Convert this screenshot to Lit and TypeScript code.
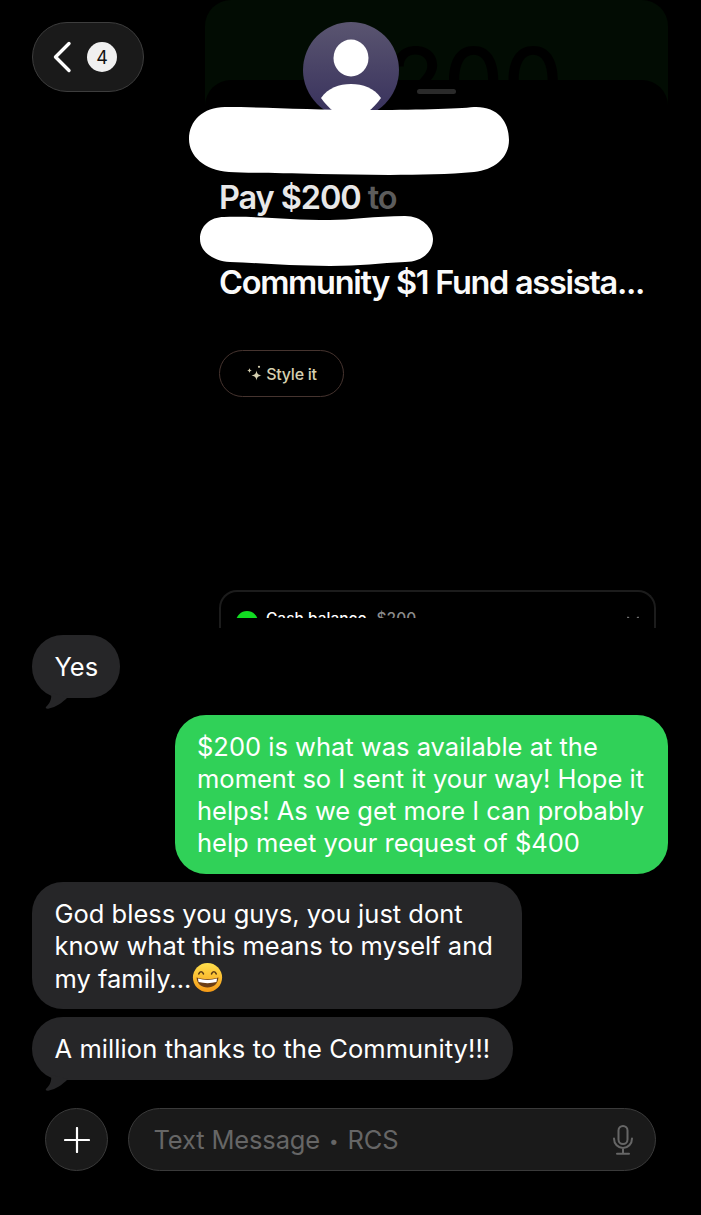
import { LitElement, html, css } from "lit";
import { customElement } from "lit/decorators.js";

@customElement("app-root")
export class AppRoot extends LitElement {
    static styles = css`
    :host {
      display: block;
      width: 701px;
      height: 1215px;
      background: #000;
      overflow: hidden;
      font-family: Inter, "Liberation Sans", sans-serif;
      color: #fff;
    }

    /* attachment preview at the top of the thread */
    .preview {
      position: relative;
      height: 630px;
      box-sizing: border-box;
      padding: 22px 46px 0 32px;
      overflow: hidden;
    }

    .green-card {
      position: absolute;
      left: 205px;
      top: 0;
      width: 463px;
      height: 105px;
      border-radius: 26px 26px 0 0;
      background: #020c03;
      overflow: hidden;
    }

    .amount {
      position: absolute;
      left: 123px;
      top: 31px;
      font-size: 92px;
      font-weight: 500;
      line-height: 100px;
      color: #000;
    }

    .sheet {
      position: absolute;
      left: 205px;
      top: 80px;
      width: 463px;
      height: 300px;
      border-radius: 26px 26px 0 0;
      background: #000;
    }

    .grabber {
      position: absolute;
      left: 212px;
      top: 9px;
      width: 39px;
      height: 5px;
      border-radius: 3px;
      background: #2a2a2a;
    }

    .top-row {
      position: relative;
      display: flex;
      align-items: flex-start;
      height: 96px;
    }

    .back {
      box-sizing: border-box;
      width: 112px;
      height: 70px;
      border-radius: 35px;
      background: #1a1a1a;
      border: 1px solid #3d3d3d;
      display: flex;
      align-items: center;
      padding-left: 19px;
      gap: 15px;
    }

    .badge {
      width: 30px;
      height: 30px;
      border-radius: 50%;
      background: #f0f0f0;
      color: #111;
      font-size: 18px;
      display: flex;
      align-items: center;
      justify-content: center;
    }

    .avatar {
      margin-left: 159px;
      width: 96px;
      height: 96px;
      border-radius: 50%;
      overflow: hidden;
      flex: none;
    }

    .name-mark {
      position: relative;
      display: block;
      margin: -12px 0 0 157px;
      width: 320px;
      height: 70px;
    }

    .details {
      position: relative;
      margin-top: -2px;
      margin-left: 187px;
      display: flex;
      flex-direction: column;
      align-items: flex-start;
    }

    .pay {
      margin-top: 3px;
      font-size: 32.5px;
      font-weight: 600;
      line-height: 42px;
      letter-spacing: -1.1px;
      color: #e8e8e8;
      white-space: nowrap;
    }

    .pay span {
      color: #5c5c5c;
    }

    .to-mark {
      display: block;
      margin: -3px 0 0 -19px;
      width: 233px;
      height: 51px;
    }

    .note {
      margin-top: -5px;
      font-size: 32.5px;
      font-weight: 600;
      line-height: 42px;
      letter-spacing: -1.3px;
      white-space: nowrap;
      color: #fafafa;
    }

    .style-it {
      box-sizing: border-box;
      margin-top: 46px;
      width: 125px;
      height: 47px;
      border-radius: 24px;
      border: 1px solid #46342f;
      display: flex;
      align-items: center;
      justify-content: center;
      gap: 3px;
      font-size: 16px;
      font-weight: 500;
      letter-spacing: -0.25px;
      color: #d6d0b0;
    }

    .balance {
      box-sizing: border-box;
      margin-top: 193px;
      width: 437px;
      height: 38px;
      border: 2px solid #1c1c1c;
      border-bottom: none;
      border-radius: 18px 18px 0 0;
    }

    .balance-clip {
      height: 26px;
      overflow: hidden;
    }

    .balance-row {
      display: flex;
      align-items: flex-start;
      gap: 8px;
      padding: 19px 15px 0 15px;
      font-size: 15.5px;
      font-weight: 500;
      line-height: 16px;
    }

    .dollar {
      width: 22px;
      height: 22px;
      border-radius: 50%;
      background: #12dc22;
      flex: none;
    }

    .balance-row .muted {
      color: #8c8c8c;
      margin-left: 2px;
    }

    .balance-row .chev {
      margin: 5px 0 0 auto;
    }

    /* conversation */
    .thread {
      display: flex;
      flex-direction: column;
      padding: 5px 33px 0 32px;
    }

    .bubble {
      position: relative;
      box-sizing: border-box;
      font-size: 25.5px;
      line-height: 32px;
      padding: 16px 22px 15px 22.5px;
      border-radius: 31px;
      white-space: nowrap;
      width: fit-content;
    }

    .in {
      background: #262628;
      color: #fff;
    }

    .out {
      background: #30d158;
      color: #fff;
      align-self: flex-end;
      margin-top: 17px;
      width: 493px;
      padding-left: 22px;
    }

    .tail {
      position: absolute;
      left: 12px;
      bottom: -11px;
      width: 24px;
      height: 16px;
    }

    .yes {
      width: 88px;
      height: 63px;
    }

    .bless {
      margin-top: 8px;
      width: 490px;
      height: 127px;
    }

    .thanks {
      margin-top: 8px;
      width: 481px;
      height: 63px;
      letter-spacing: 0.08px;
    }

    .emoji {
      display: inline-block;
      width: 31px;
      height: 31px;
      vertical-align: -5px;
      margin-left: 1px;
    }

    /* composer */
    .composer {
      display: flex;
      align-items: center;
      gap: 20px;
      padding: 28px 45px 0;
    }

    .plus {
      box-sizing: border-box;
      width: 63px;
      height: 63px;
      border-radius: 50%;
      background: #1a1a1a;
      border: 1px solid #3a3a3a;
      display: flex;
      align-items: center;
      justify-content: center;
      flex: none;
    }

    .field {
      box-sizing: border-box;
      flex: 1;
      height: 63px;
      border-radius: 32px;
      background: #1a1a1a;
      border: 1px solid #3a3a3a;
      display: flex;
      align-items: center;
      justify-content: space-between;
      padding: 0 21px 0 24.5px;
      font-size: 25.5px;
      letter-spacing: -0.15px;
      color: #666;
    }

    .field .dot {
      font-size: 17px;
      vertical-align: 2px;
      margin: 0 2px;
    }
  `;

    render() {
        const tail = html`<svg class="tail" viewBox="0 0 24 16"><path d="M7 0 C8 6 6 10 2 14 C1 15.5 3 16 5 15.5 C12 14 18 10 24 4 Z" fill="#262628"/></svg>`;
        return html`
      <div class="preview">
        <div class="green-card"><div class="amount">$200</div></div>
        <div class="sheet"><div class="grabber"></div></div>

        <div class="top-row">
          <div class="back">
            <svg width="20" height="32" viewBox="0 0 20 32" fill="none">
              <path d="M17 2.5 3.5 16 17 29.5" stroke="#fff" stroke-width="3.4" stroke-linecap="round" stroke-linejoin="round"/>
            </svg>
            <div class="badge">4</div>
          </div>
          <div class="avatar">
            <svg width="96" height="96" viewBox="0 0 96 96">
              <defs>
                <linearGradient id="av" x1="0" y1="0" x2="0" y2="1">
                  <stop offset="0" stop-color="#5a5570"/>
                  <stop offset="1" stop-color="#37305c"/>
                </linearGradient>
              </defs>
              <rect width="96" height="96" fill="url(#av)"/>
              <ellipse cx="48" cy="36" rx="17.5" ry="18.5" fill="#fff"/>
              <path d="M18 76c7-10 18-14 30-14s23 4 30 14c-7 10-18 20-30 20S25 86 18 76Z" fill="#fff"/>
            </svg>
          </div>
        </div>

        <!-- hand drawn redaction over the name -->
        <svg class="name-mark" viewBox="0 0 320 70">
          <path d="M36 1C80 1 120 4 180 4C220 4 270 3 285 1C308 0 320 15 320 34C320 52 305 64 285 66C240 70 180 69 130 68C90 67 60 67 40 66C15 64 0 50 0 33C0 15 14 1 36 1Z" fill="#fff"/>
        </svg>

        <div class="details">
          <div class="pay">Pay $200 <span>to</span></div>
          <svg class="to-mark" viewBox="0 0 233 51">
            <path d="M24 1C60 0 90 4 130 4C150 4 175 0 205 0C222 0 233 12 233 23C233 36 222 46 205 46C180 47 160 50 130 50C90 50 60 47 30 46C12 45 0 35 0 23C0 10 10 1 24 1Z" fill="#fff"/>
          </svg>
          <div class="note">Community $1 Fund assista...</div>
          <div class="style-it">
            <svg width="17" height="17" viewBox="0 0 17 17" fill="#d6d0b0">
              <path d="M10.5 5.5c.5 3.200 1.500 4.300 5 5-3.500.7-4.500 1.800-5 5-.5-3.200-1.500-4.300-5-5 3.500-.7 4.500-1.800 5-5Z"/>
              <path d="M3.500 3c.3 1.600.8 2.200 2.500 2.500-1.700.3-2.200.9-2.500 2.500-.3-1.600-.8-2.200-2.500-2.500 1.700-.3 2.200-.9 2.500-2.500Z"/>
              <circle cx="13" cy="1.800" r="1.100"/>
            </svg>
            Style it
          </div>
          <div class="balance">
            <div class="balance-clip">
              <div class="balance-row">
                <div class="dollar"></div>
                <span>Cash balance</span>
                <span class="muted">$200</span>
                <svg class="chev" width="12" height="10" viewBox="0 0 12 10" fill="none">
                  <path d="M1 1.500 6 8l5-6.500" stroke="#777" stroke-width="1.800" stroke-linecap="round"/>
                </svg>
              </div>
            </div>
          </div>
        </div>
      </div>

      <div class="thread">
        <div class="bubble in yes">Yes${tail}</div>
        <div class="bubble out">$200 is what was available at the<br>moment so I sent it your way! Hope it<br>helps! As we get more I can probably<br>help meet your request of $400</div>
        <div class="bubble in bless">
          God bless you guys, you just dont<br>know what this means to myself and<br>my family...<svg class="emoji" viewBox="0 0 34 34">
            <defs>
              <linearGradient id="em" x1="0" y1="0" x2="0" y2="1">
                <stop offset="0" stop-color="#ffe04d"/>
                <stop offset="1" stop-color="#f59a16"/>
              </linearGradient>
            </defs>
            <circle cx="17" cy="17" r="16" fill="url(#em)"/>
            <path d="M7.500 13c1-3 4-3 5 0M21.500 13c1-3 4-3 5 0" fill="none" stroke="#5a3a14" stroke-width="1.800" stroke-linecap="round"/>
            <path d="M5 17c8 2.500 16 2.500 24 0-.5 7-5.500 11-12 11S5.500 24 5 17Z" fill="#6b3d14"/>
            <path d="M6.500 18.200c7 2 14 2 21 0l-.7 3.800c-6.500 1.600-13 1.600-19.600 0Z" fill="#fff"/>
          </svg>
        </div>
        <div class="bubble in thanks">A million thanks to the Community!!!${tail}</div>
      </div>

      <div class="composer">
        <div class="plus">
          <svg width="26" height="26" viewBox="0 0 26 26" fill="none">
            <path d="M13 1v24M1 13h24" stroke="#fff" stroke-width="2.200" stroke-linecap="round"/>
          </svg>
        </div>
        <div class="field">
          <span>Text Message <span class="dot">•</span> RCS</span>
          <svg width="22" height="30" viewBox="0 0 22 30" fill="none" stroke="#666" stroke-width="2" stroke-linecap="round">
            <rect x="6.500" y="1" width="9" height="18" rx="4.500"/>
            <path d="M2 13.500c0 5.500 4 9.500 9 9.500s9-4 9-9.500M11 23v5M5 28.800h12"/>
          </svg>
        </div>
      </div>
    `;
    }
}

declare global {
    interface HTMLElementTagNameMap {
        "app-root": AppRoot;
    }
}
